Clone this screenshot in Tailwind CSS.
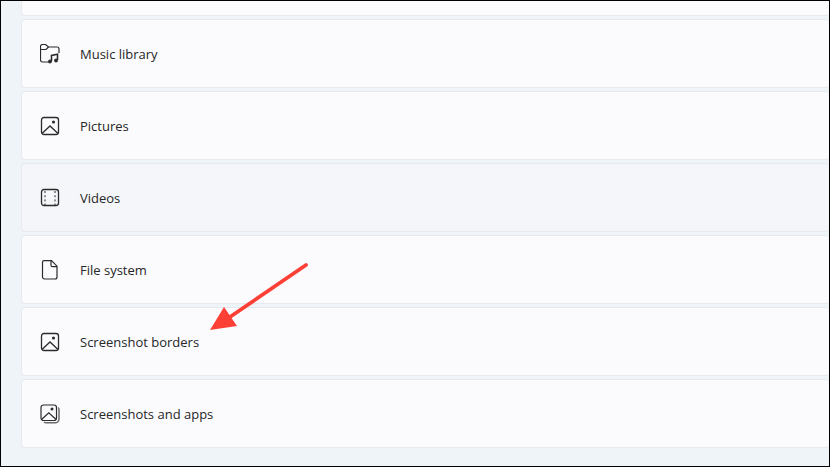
<!DOCTYPE html>
<html lang="en">
<head>
  <meta charset="UTF-8">
  <title>Storage folders</title>
  <script src="https://cdn.jsdelivr.net/npm/@tailwindcss/browser@4"></script>
</head>
<body class="w-[830px] h-[467px] overflow-hidden bg-black">
  <div class="relative w-[828px] h-[465px] mt-px ml-px bg-[#eff4f9] pl-[20px] font-['Open_Sans','Liberation_Sans',sans-serif] text-[13px] text-[#262626]">
    <div class="flex flex-col gap-[3px]">
      <div class="h-[15px] bg-[#fbfbfe] border border-t-0 border-r-0 border-[#e6e9ee] rounded-b"></div>

      <div class="h-[69px] flex items-center bg-[#fbfbfe] border border-r-0 border-[#e6e9ee] rounded">
        <svg class="w-5 h-5 ml-[18px] mr-5" viewBox="0 0 20 20" fill="none" stroke="#2b2b2b" stroke-width="1.200">
          <path d="M9 18H2.500a2 2 0 0 1-2-2V2.500a2 2 0 0 1 2-2h3l3 2.500h8.500a2 2 0 0 1 2 2V9"/>
          <path d="M.5 5.500H6l2.500-2.500"/>
          <path d="M11.500 17V11.500l6-1.200V16" stroke-width="1.600"/>
          <circle cx="10" cy="17.500" r="1.900" fill="#2b2b2b" stroke="none"/>
          <circle cx="16" cy="16.500" r="1.900" fill="#2b2b2b" stroke="none"/>
        </svg>
        <span class="mt-[2px]">Music library</span>
      </div>

      <div class="h-[69px] flex items-center bg-[#fbfbfe] border border-r-0 border-[#e6e9ee] rounded">
        <svg class="w-5 h-5 ml-[18px] mr-5" viewBox="0 0 20 20" fill="none" stroke="#2b2b2b" stroke-width="1.300">
          <rect x="1.500" y="1.500" width="17" height="17" rx="2.500"/>
          <path d="M2 17.500l8-7.500 8 7.500"/>
          <circle cx="13.500" cy="6" r="1.600" fill="#2b2b2b" stroke="none"/>
        </svg>
        <span class="mt-[2px]">Pictures</span>
      </div>

      <div class="h-[69px] flex items-center bg-[#f5f6f9] border border-r-0 border-[#e6e9ee] rounded">
        <svg class="w-5 h-5 ml-[18px] mr-5" viewBox="0 0 20 20" fill="none" stroke="#2b2b2b" stroke-width="1.300">
          <rect x="1.500" y="1.500" width="17" height="16" rx="2.500"/>
          <path d="M5 3v14M15 3v14" stroke-dasharray="2 2.200" stroke-width="1"/>
        </svg>
        <span class="mt-[2px]">Videos</span>
      </div>

      <div class="h-[69px] flex items-center bg-[#fbfbfe] border border-r-0 border-[#e6e9ee] rounded">
        <svg class="w-5 h-5 ml-[18px] mr-5" viewBox="0 0 20 20" fill="none" stroke="#2b2b2b" stroke-width="1.200">
          <path d="M4 .7h7.500L17 6.200V17a2 2 0 0 1-2 2H4.500a2 2 0 0 1-2-2V2.200A1.500 1.500 0 0 1 4 .7z"/>
          <path d="M11 .7v4.500a1.500 1.500 0 0 0 1.500 1.500H17"/>
        </svg>
        <span class="mt-[2px]">File system</span>
      </div>

      <div class="h-[69px] flex items-center bg-[#fbfbfe] border border-r-0 border-[#e6e9ee] rounded">
        <svg class="w-5 h-5 ml-[18px] mr-5" viewBox="0 0 20 20" fill="none" stroke="#2b2b2b" stroke-width="1.300">
          <rect x="1.500" y="1.500" width="17" height="17" rx="2.500"/>
          <path d="M2 17.500l8-7.500 8 7.500"/>
          <circle cx="13.500" cy="6" r="1.600" fill="#2b2b2b" stroke="none"/>
        </svg>
        <span class="mt-[2px]">Screenshot borders</span>
      </div>

      <div class="h-[69px] flex items-center bg-[#fbfbfe] border border-r-0 border-[#e6e9ee] rounded">
        <svg class="w-5 h-5 ml-[18px] mr-5" viewBox="0 0 20 20" fill="none" stroke="#2b2b2b" stroke-width="1.200">
          <rect x="1" y="1" width="15.500" height="15.500" rx="2.500"/>
          <path d="M1.500 15.500l7.300-6.800 7.300 6.800"/>
          <circle cx="12" cy="5" r="1.500" fill="#2b2b2b" stroke="none"/>
          <path d="M18 3.500a2.500 2.500 0 0 1 1 2v9.500a3.800 3.800 0 0 1-3.800 3.800H6a2.500 2.500 0 0 1-2-.8" stroke="#6b6b6b" stroke-width="1.500"/>
        </svg>
        <span class="mt-[2px]">Screenshots and apps</span>
      </div>
    </div>

    <svg class="absolute left-0 top-0 w-[828px] h-[465px] pointer-events-none" viewBox="0 0 828 465" fill="none">
      <path d="M305 264L226 318" stroke="#fd4036" stroke-width="3.800" stroke-linecap="round"/>
      <path d="M209 329L223 306L236 325Z" fill="#fd4036"/>
    </svg>
  </div>
</body>
</html>
